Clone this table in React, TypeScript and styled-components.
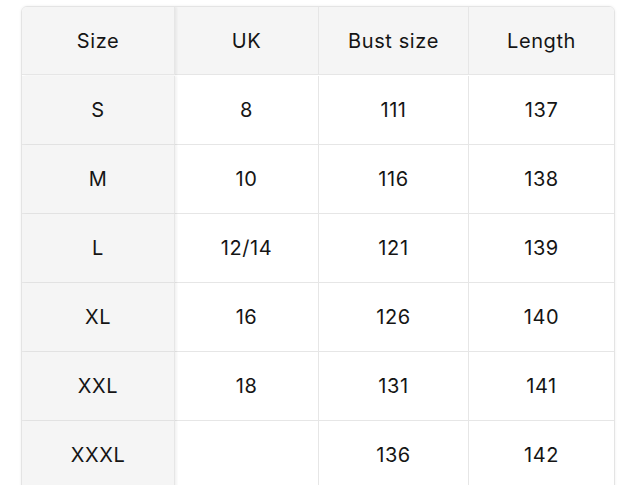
import React from "react";
import styled, { createGlobalStyle } from "styled-components";

const Global = createGlobalStyle`
  html, body { margin: 0; padding: 0; background: #ffffff; }
  body { font-family: Inter, "Noto Sans", "Liberation Sans", sans-serif; color: #111; }
`;

const Page = styled.div`
  padding: 6px 0 0 21px;
  width: 640px;
  height: 485px;
  box-sizing: border-box;
  overflow: hidden;
`;

const Card = styled.div`
  width: 594px;
  border: 1px solid #e4e4e4;
  border-radius: 6px;
  box-shadow: 0 0 3px rgba(0, 0, 0, 0.07);
  overflow: hidden;
  box-sizing: border-box;
`;

const Grid = styled.div`
  display: grid;
  grid-template-columns: 153px 144px 150px 145px;
  grid-auto-rows: 69px;
  & > :nth-child(-n + 4) { height: 68px; }
`;

const Cell = styled.div<{ $shade?: boolean; $sticky?: boolean; $last?: boolean }>`
  display: flex;
  align-items: center;
  justify-content: center;
  box-sizing: border-box;
  font-size: 20px;
  letter-spacing: 0.6px;
  font-weight: 400;
  color: #151515;
  background: ${(p) => (p.$shade ? "#f5f5f5" : "#ffffff")};
  border-bottom: 1px solid #e6e6e6;
  border-right: ${(p) => (p.$last ? "none" : "1px solid #e6e6e6")};
  box-shadow: ${(p) => (p.$sticky ? "2px 0 2px rgba(0,0,0,0.05)" : "none")};
  position: ${(p) => (p.$sticky ? "relative" : "static")};
  z-index: ${(p) => (p.$sticky ? 1 : 0)};
`;

const headers = ["Size", "UK", "Bust size", "Length"];
const rows = [
  ["S", "8", "111", "137"],
  ["M", "10", "116", "138"],
  ["L", "12/14", "121", "139"],
  ["XL", "16", "126", "140"],
  ["XXL", "18", "131", "141"],
  ["XXXL", "", "136", "142"],
];

export default function App() {
  return (
    <>
      <Global />
      <Page>
        <Card>
          <Grid>
            {headers.map((h, i) => (
              <Cell key={h} $shade $sticky={i === 0} $last={i === 3}>
                {h}
              </Cell>
            ))}
            {rows.map((r) =>
              r.map((v, i) => (
                <Cell key={r[0] + i} $shade={i === 0} $sticky={i === 0} $last={i === 3}>
                  {v}
                </Cell>
              ))
            )}
          </Grid>
        </Card>
      </Page>
    </>
  );
}
